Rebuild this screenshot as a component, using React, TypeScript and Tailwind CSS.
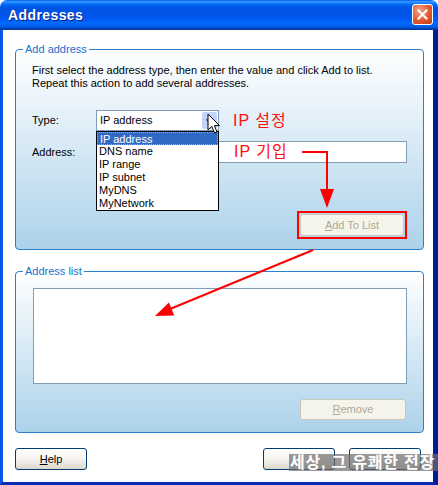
import React from 'react';

const types = ['IP address', 'DNS name', 'IP range', 'IP subnet', 'MyDNS', 'MyNetwork'];

const XpButton = ({ label, hot, disabled, className = '' }: { label?: string; hot?: number; disabled?: boolean; className?: string }) => (
  <div
    className={`flex items-center justify-center rounded-[3px] border text-[11px] ${
      disabled
        ? 'border-[#c9c7ba] bg-[#f5f4ea] text-[#aca899]'
        : 'border-[#003c74] bg-gradient-to-b from-white via-[#f4f3ee] to-[#dcd8cc] text-black'
    } ${className}`}
  >
    {label && hot !== undefined && (
      <span>
        {label.slice(0, hot)}
        <span className="underline">{label[hot]}</span>
        {label.slice(hot + 1)}
      </span>
    )}
  </div>
);

const GroupBox = ({ title, children, className = '' }: { title: string; children: React.ReactNode; className?: string }) => (
  <div className={`relative rounded-[4px] border border-[#2a80cc] bg-gradient-to-b from-white to-[#acd2ea] ${className}`}>
    <span className="absolute -top-[8px] left-[7px] bg-white px-[2px] text-[11px] leading-[14px] text-[#1a70cc]">{title}</span>
    {children}
  </div>
);

export default function App() {
  return (
    <div className="relative flex h-[485px] w-[438px] flex-col overflow-hidden font-['Liberation_Sans','Noto_Sans_CJK_KR',sans-serif] text-[11px] text-black">
      {/* Title bar */}
      <div className="flex h-[30px] shrink-0 items-center justify-between rounded-t-[7px] bg-[linear-gradient(to_bottom,#0058ee_0%,#3593ff_5%,#288eff_8%,#127dff_11%,#036ffc_14%,#0262ee_18%,#0057e5_24%,#0054e3_30%,#0055eb_56%,#005bf5_66%,#026afe_76%,#0062ef_86%,#0052d6_92%,#0040ab_96%,#003092_100%)] pl-[8px] pr-[5px]">
        <span className="text-[14px] font-bold tracking-[0.4px] text-white [text-shadow:1px_1px_0_#0a1f80]">Addresses</span>
        <div className="mb-[1px] flex h-[21px] w-[21px] items-center justify-center rounded-[3px] border border-white bg-[radial-gradient(circle_at_35%_30%,#f4a48a,#e2582f_55%,#c23a12)]">
          <svg width="11" height="11" viewBox="0 0 11 11">
            <path d="M1.5 1.5 L9.5 9.5 M9.5 1.5 L1.5 9.5" stroke="white" strokeWidth="2.2" strokeLinecap="square" />
          </svg>
        </div>
      </div>

      {/* Client area */}
      <div className="flex flex-1 flex-col border-b-[3px] border-l-[3px] border-r-[5px] border-b-[#0a2bb0] border-l-[#0b55e6] border-r-[#001d98] bg-white px-[12px] pt-[19px]">
        <GroupBox title="Add address" className="w-[409px] pb-[10px] pl-[16px] pr-[16px] pt-[14px]">
          <p className="leading-[13px]">
            First select the address type, then enter the value and click Add to list.
            <br />
            Repeat this action to add several addresses.
          </p>

          <div className="mt-[20px] flex items-center">
            <span className="w-[64px]">Type:</span>
            <div className="relative flex h-[21px] w-[123px] items-center border border-[#7f9db9] bg-white pl-[3px]">
              <span>IP address</span>
              <div className="absolute right-[1px] top-[1px] flex h-[17px] w-[15px] items-center justify-center rounded-[2px] bg-[#c3d3fd]">
                <svg width="7" height="4" viewBox="0 0 7 4">
                  <path d="M0 0 L3.5 3.5 L7 0" fill="none" stroke="#4d6185" strokeWidth="1.5" />
                </svg>
              </div>
              {/* Open dropdown list */}
              <div className="absolute left-[-1px] top-[20px] z-10 w-[123px] border border-black bg-white">
                {types.map((t, i) => (
                  <div
                    key={t}
                    className={`h-[13px] pl-[2px] leading-[13px] ${
                      i === 0 ? 'border border-dotted border-[#e8a64a] bg-[#316ac5] pl-[1px] leading-[11px] text-white' : ''
                    }`}
                  >
                    {t}
                  </div>
                ))}
              </div>
              {/* Mouse pointer */}
              <svg className="absolute left-[110px] top-[2px] z-20" width="14" height="22" viewBox="0 0 14 22">
                <path d="M1 1 L1 17 L4.8 13.4 L7.5 20 L10 19 L7.4 12.6 L12.5 12.6 Z" fill="white" stroke="black" strokeWidth="1" strokeLinejoin="miter" />
              </svg>
            </div>
            <span className="ml-[14px] text-[16px] leading-none tracking-[1px] text-[#ff1010]">IP 설정</span>
          </div>

          <div className="mt-[10px] flex items-center">
            <span className="w-[64px]">Address:</span>
            <div className="flex h-[22px] w-[311px] items-center border border-[#7f9db9] bg-white pl-[137px]">
              <span className="text-[16px] leading-none tracking-[1px] text-[#ff1010]">IP 기입</span>
            </div>
          </div>

          <div className="mt-[48px] flex justify-end">
            <div className="border-2 border-[#ff0000] p-[1px]">
              <XpButton label="Add To List" hot={0} disabled className="h-[22px] w-[104px]" />
            </div>
          </div>
        </GroupBox>

        <GroupBox title="Address list" className="mt-[21px] w-[409px] pb-[12px] pl-[17px] pr-[16px] pt-[16px]">
          <div className="h-[96px] w-[374px] border border-[#7f9db9] bg-white" />
          <div className="mt-[15px] flex justify-end pr-[1px]">
            <XpButton label="Remove" hot={0} disabled className="h-[21px] w-[106px]" />
          </div>
        </GroupBox>

        <div className="mt-[15px] flex items-center">
          <XpButton label="Help" hot={0} className="h-[22px] w-[72px]" />
          <div className="ml-auto flex gap-[14px]">
            <XpButton className="h-[22px] w-[72px]" />
            <XpButton className="h-[22px] w-[72px]" />
          </div>
        </div>
      </div>

      {/* Watermark */}
      <div className="absolute left-[289px] top-[454px] flex h-[17px] w-[149px] items-center overflow-hidden whitespace-nowrap bg-[#6e6e6e]/70 pl-[1px] text-[16px] font-bold leading-none tracking-[0.8px] text-white">
        세상, 그 유쾌한 전장
      </div>

      {/* Red annotation arrows */}
      <svg className="pointer-events-none absolute left-0 top-0" width="438" height="485" viewBox="0 0 438 485">
        <polyline points="302,152 327,152 327,192" fill="none" stroke="#ff0000" strokeWidth="2" />
        <polygon points="320,189 334,189 327,208" fill="#ff0000" />
        <line x1="313" y1="250" x2="170" y2="309" stroke="#ff0000" strokeWidth="2" />
        <polygon points="155,316 174.3,315.6 168.9,302.6" fill="#ff0000" />
      </svg>
    </div>
  );
}
